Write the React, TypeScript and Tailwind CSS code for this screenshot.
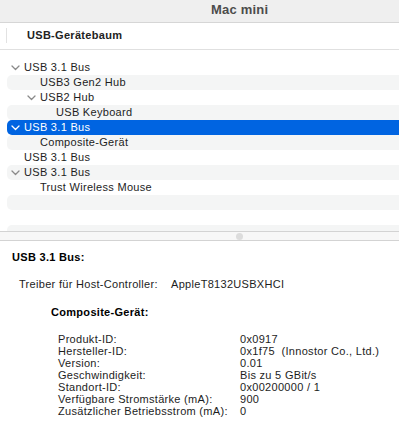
const rows = [
  { label: "USB 3.1 Bus", level: 0, open: true },
  { label: "USB3 Gen2 Hub", level: 1 },
  { label: "USB2 Hub", level: 1, open: true },
  { label: "USB Keyboard", level: 2 },
  { label: "USB 3.1 Bus", level: 0, open: true, selected: true },
  { label: "Composite-Gerät", level: 1 },
  { label: "USB 3.1 Bus", level: 0 },
  { label: "USB 3.1 Bus", level: 0, open: true },
  { label: "Trust Wireless Mouse", level: 1 },
  { label: "", level: 0 },
  { label: "", level: 0 },
  { label: "", level: 0 },
];

const props = [
  ["Produkt-ID:", "0x0917"],
  ["Hersteller-ID:", "0x1f75  (Innostor Co., Ltd.)"],
  ["Version:", "0.01"],
  ["Geschwindigkeit:", "Bis zu 5 GBit/s"],
  ["Standort-ID:", "0x00200000 / 1"],
  ["Verfügbare Stromstärke (mA):", "900"],
  ["Zusätzlicher Betriebsstrom (mA):", "0"],
];

function Chevron({ white }: { white?: boolean }) {
  return (
    <svg width="9" height="6" viewBox="0 0 9 6" className="shrink-0">
      <path
        d="M1 1 L4.5 4.5 L8 1"
        fill="none"
        stroke={white ? "#ffffff" : "#8a8a8a"}
        strokeWidth="1.3"
        strokeLinecap="round"
        strokeLinejoin="round"
      />
    </svg>
  );
}

export default function App() {
  return (
    <div
      className="h-[422px] w-[399px] overflow-hidden bg-white text-[11px] tracking-[0.3px] text-[#1d1d1d]"
      style={{ fontFamily: '"Liberation Sans", Arial, sans-serif' }}
    >
      <div className="flex h-[23px] items-center border-b border-[#d6d6d6] bg-[#efefef] pl-[211px] pb-[3px]">
        <span className="text-[13px] font-bold tracking-[0.2px] text-[#4c4c4c]">Mac mini</span>
      </div>

      <div className="relative flex h-[27px] items-center border-b border-[#e0e0e0] pl-[27px] pb-[1px]">
        <div className="absolute left-[6px] top-[5px] h-[15px] w-px bg-[#e2e2e2]" />
        <span className="font-bold text-[#222]">USB-Gerätebaum</span>
      </div>

      <div className="h-[181px] overflow-hidden pt-[10px]">
        {rows.map((r, i) => (
          <div
            key={i}
            className={
              "ml-[7px] flex h-[15px] items-center rounded-l-[5px] " +
              (r.selected ? "bg-[#0064e1] text-white " : i % 2 === 1 ? "bg-[#f4f5f5] " : "")
            }
            style={{ paddingLeft: 4 + r.level * 16 }}
          >
            <div className="flex w-[13px] items-center">{r.open && <Chevron white={r.selected} />}</div>
            <span className="leading-none">{r.label}</span>
          </div>
        ))}
      </div>

      <div className="flex h-[10px] items-center border-y border-[#d3d3d3] bg-[#f7f7f7] pl-[236px]">
        <div className="h-[7px] w-[7px] rounded-full bg-[#dcdcdc]" />
      </div>

      <div className="pl-[12px] pt-[10px] leading-[13px]">
        <div className="font-bold text-black">USB 3.1 Bus:</div>
        <div className="mt-[14px] flex pl-[7px]">
          <span className="w-[152px]">Treiber für Host-Controller:</span>
          <span>AppleT8132USBXHCI</span>
        </div>
        <div className="mt-[15px] pl-[39px] font-bold text-black">Composite-Gerät:</div>
        <div className="mt-[14px] pl-[46px]">
          {props.map(([k, v]) => (
            <div key={k} className="flex h-[12px] items-center">
              <span className="w-[182px] shrink-0 whitespace-nowrap">{k}</span>
              <span className="whitespace-pre">{v}</span>
            </div>
          ))}
        </div>
      </div>
    </div>
  );
}
